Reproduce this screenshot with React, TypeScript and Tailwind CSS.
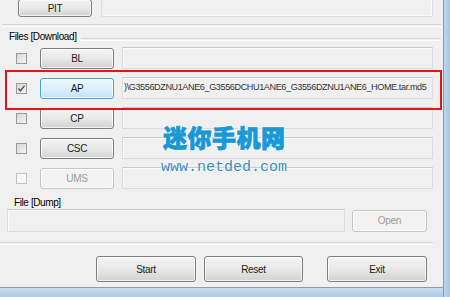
import React from "react";

const FONT = { fontFamily: '"Liberation Sans", Arial, sans-serif' };

type BtnProps = {
  label: string;
  className?: string;
  variant?: "normal" | "hot" | "disabled";
};

function WinButton({ label, className = "", variant = "normal" }: BtnProps) {
  const look =
    variant === "hot"
      ? "border-[#4aa3d3] bg-gradient-to-b from-[#eef8fd] via-[#dcf0fb] to-[#c3e4f6] text-[#1b1b1b]"
      : variant === "disabled"
        ? "border-[#c4c6c8] bg-[#f3f3f3] text-[#9a9a9a]"
        : "border-[#7e7e7e] bg-gradient-to-b from-[#f4f4f4] via-[#e8e8e8] to-[#d2d2d2] text-[#1b1b1b]";
  return (
    <div
      className={`flex items-center justify-center rounded-[3px] border text-[10px] tracking-[-0.3px] shadow-[inset_0_0_0_1px_rgba(255,255,255,0.7)] ${look} ${className}`}
    >
      {label}
    </div>
  );
}

function CheckBox({ checked = false, disabled = false }: { checked?: boolean; disabled?: boolean }) {
  return (
    <div
      className={`flex h-[11px] w-[11px] shrink-0 items-center justify-center border ${
        disabled ? "border-[#c2c2c2] bg-[#f7f7f7]" : "border-[#9a9a9a] bg-gradient-to-br from-[#d8d8d8] to-[#f4f4f4]"
      }`}
    >
      {checked && (
        <svg width="9" height="9" viewBox="0 0 9 9">
          <path d="M1.5 4.5 L3.5 6.8 L7.6 1.6" fill="none" stroke="#4a5a6a" strokeWidth="1.4" />
        </svg>
      )}
    </div>
  );
}

function TextBox({ className = "", children }: { className?: string; children?: React.ReactNode }) {
  return (
    <div
      className={`flex items-center overflow-hidden whitespace-nowrap border border-[#dcdcdc] border-t-[#c9c9c9] bg-[#f0f0f0] shadow-[inset_1px_1px_0_#fbfbfb] ${className}`}
    >
      {children}
    </div>
  );
}

const rows = [
  { name: "BL" },
  { name: "AP", checked: true, hot: true, file: ")\\G3556DZNU1ANE6_G3556DCHU1ANE6_G3556DZNU1ANE6_HOME.tar.md5" },
  { name: "CP" },
  { name: "CSC" },
  { name: "UMS", disabled: true },
];

export default function App() {
  return (
    <div className="relative flex h-[297px] w-[450px] overflow-hidden bg-[#f0f0f0] text-black" style={FONT}>
      <div className="flex w-[443px] flex-col">
        {/* top strip */}
        <div className="-mt-[1px] flex h-[18px] items-start">
          <WinButton label="PIT" className="ml-[18px] h-[18px] w-[74px]" />
          <div className="ml-[9px] h-[18px] w-[332px] rounded-b-[2px] border border-t-0 border-[#dedede] shadow-[inset_-1px_-1px_0_#fbfbfb]" />
        </div>
        <div className="mt-[7px] ml-[2px] mr-[2px] h-[2px] border-t border-[#d4d4d4] shadow-[0_1px_0_#ffffff]" />

        {/* Files [Download] */}
        <div className="mt-[5px] flex h-[12px] items-center">
          <span className="ml-[9px] text-[10px] leading-none tracking-[-0.4px]">Files [Download]</span>
          <div className="ml-[4px] mr-[2px] mt-[4px] h-[2px] flex-1 border-t border-[#d6d6d6] shadow-[0_1px_0_#ffffff]" />
        </div>

        <div className="mt-[4px] flex flex-col gap-[8px]">
          {rows.map((r) => (
            <div key={r.name} className="flex h-[22px] items-center">
              <div className="ml-[16px]">
                <CheckBox checked={r.checked} disabled={r.disabled} />
              </div>
              <WinButton
                label={r.name}
                variant={r.hot ? "hot" : r.disabled ? "disabled" : "normal"}
                className="ml-[13px] h-[21px] w-[74px]"
              />
              <TextBox className="ml-[8px] h-[22px] w-[311px]">
                {r.file && (
                  <span className="pl-[1px] text-[9.1px] tracking-[-0.4px] text-[#333333]">{r.file}</span>
                )}
              </TextBox>
            </div>
          ))}
        </div>

        {/* File [Dump] */}
        <div className="mt-[9px] flex h-[10px] items-center">
          <span className="ml-[14px] text-[10px] leading-none tracking-[-0.4px]">File [Dump]</span>
        </div>
        <div className="mt-[1px] flex h-[23px] items-center">
          <TextBox className="ml-[7px] h-[23px] w-[338px]" />
          <WinButton label="Open" variant="disabled" className="ml-[7px] h-[22px] w-[75px]" />
        </div>
        <div className="mt-[10px] ml-0 mr-[10px] h-[2px] border-t border-[#d6d6d6] shadow-[0_1px_0_#ffffff]" />

        {/* bottom buttons */}
        <div className="mt-[12px] flex h-[26px] items-center">
          <WinButton label="Start" className="ml-[96px] h-[26px] w-[100px]" />
          <WinButton label="Reset" className="ml-[8px] h-[26px] w-[99px]" />
          <WinButton label="Exit" className="ml-[24px] h-[26px] w-[100px]" />
        </div>

        <div className="mt-auto h-[10px] border-t border-[#8f9aa5] bg-gradient-to-b from-[#c9dcef] to-[#aecbe6]" />
      </div>
      <div className="flex w-[7px] flex-col border-l border-[#8f9aa5] bg-gradient-to-r from-[#bcd5ec] to-[#a9c6e3]" />

      {/* red annotation box */}
      <div className="pointer-events-none absolute left-[5px] top-[70px] h-[40px] w-[437px] border-2 border-[#e2151d]" />

      {/* watermark */}
      <div className="pointer-events-none absolute left-[163px] top-[123px] flex flex-col">
        <span
          className="text-[24px] font-black leading-[28px] tracking-[0.5px] text-[#1a98d5]"
          style={{
            fontFamily: '"Noto Sans CJK SC", sans-serif',
            WebkitTextStroke: "0.8px #1a98d5",
            textShadow: "0 0 2px #fff, 0 0 2px #fff, 1px 1px 1px #fff, -1px -1px 1px #fff",
          }}
        >
          迷你手机网
        </span>
        <span
          className="-ml-[2px] mt-[9px] text-[15px] leading-[16px] text-[#3a8cc0]"
          style={{ fontFamily: '"Liberation Mono", monospace', textShadow: "0 0 2px #fff, 0 0 2px #fff" }}
        >
          www.netded.com
        </span>
      </div>
    </div>
  );
}
